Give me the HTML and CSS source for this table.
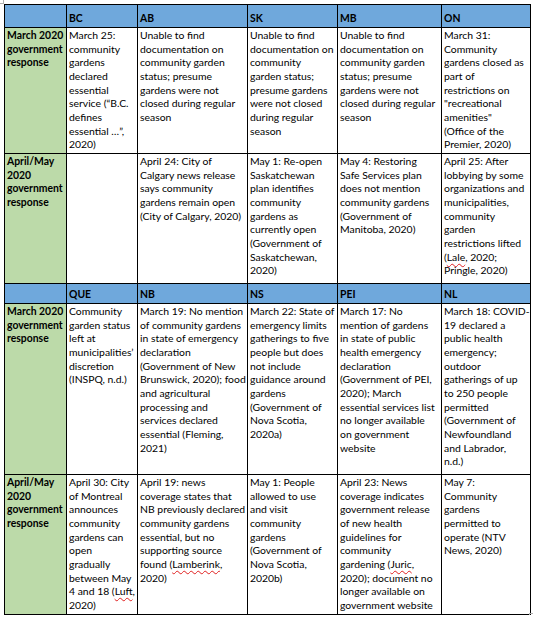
FILE: index.html
```html
<!DOCTYPE html>
<html>
<head>
<meta charset="utf-8">
<link rel="stylesheet" href="styles.css">
</head>
<body>
<div class="wrap">
<span class="handle-tl"></span>
<table class="grid">
<colgroup>
<col class="c0"><col class="c1"><col class="c2"><col class="c3"><col class="c4"><col class="c5">
</colgroup>
<tr class="head h1">
<th></th><th>BC</th><th>AB</th><th>SK</th><th>MB</th><th>ON</th>
</tr>
<tr class="r1">
<td class="label">March 2020<br>government<br>response</td>
<td>March 25:<br>community<br>gardens<br>declared<br>essential<br>service (“B.C.<br>defines<br>essential …”,<br>2020)</td>
<td>Unable to find<br>documentation on<br>community garden<br>status; presume<br>gardens were not<br>closed during regular<br>season</td>
<td>Unable to find<br>documentation on<br>community<br>garden status;<br>presume gardens<br>were not closed<br>during regular<br>season</td>
<td>Unable to find<br>documentation on<br>community garden<br>status; presume<br>gardens were not<br>closed during regular<br>season</td>
<td>March 31:<br>Community<br>gardens closed as<br>part of<br>restrictions on<br>"recreational<br>amenities"<br>(Office of the<br>Premier, 2020)</td>
</tr>
<tr class="r2">
<td class="label">April/May<br>2020<br>government<br>response</td>
<td></td>
<td>April 24: City of<br>Calgary news release<br>says community<br>gardens remain open<br>(City of Calgary, 2020)</td>
<td>May 1: Re-open<br>Saskatchewan<br>plan identifies<br>community<br>gardens as<br>currently open<br>(Government of<br>Saskatchewan,<br>2020)</td>
<td>May 4: Restoring<br>Safe Services plan<br>does not mention<br>community gardens<br>(Government of<br>Manitoba, 2020)</td>
<td>April 25: After<br>lobbying by some<br>organizations and<br>municipalities,<br>community<br>garden<br>restrictions lifted<br>(<span class="sp">Lale</span>, 2020;<br>Pringle, 2020)</td>
</tr>
<tr class="head h2">
<th></th><th>QUE</th><th>NB</th><th>NS</th><th>PEI</th><th>NL</th>
</tr>
<tr class="r3">
<td class="label">March 2020<br>government<br>response</td>
<td>Community<br>garden status<br>left at<br>municipalities’<br>discretion<br>(INSPQ, n.d.)</td>
<td>March 19: No mention<br>of community gardens<br>in state of emergency<br>declaration<br>(Government of New<br>Brunswick, 2020); food<br>and agricultural<br>processing and<br>services declared<br>essential (Fleming,<br>2021)</td>
<td>March 22: State of<br>emergency limits<br>gatherings to five<br>people but does<br>not include<br>guidance around<br>gardens<br>(Government of<br>Nova Scotia,<br>2020a)</td>
<td>March 17: No<br>mention of gardens<br>in state of public<br>health emergency<br>declaration<br>(Government of PEI,<br>2020); March<br>essential services list<br>no longer available<br>on government<br>website</td>
<td>March 18: COVID-<br>19 declared a<br>public health<br>emergency;<br>outdoor<br>gatherings of up<br>to 250 people<br>permitted<br>(Government of<br>Newfoundland<br>and Labrador,<br>n.d.)</td>
</tr>
<tr class="r4">
<td class="label">April/May<br>2020<br>government<br>response</td>
<td>April 30: City<br>of Montreal<br>announces<br>community<br>gardens can<br>open<br>gradually<br>between May<br>4 and 18 (<span class="sp">Luft</span>,<br>2020)</td>
<td>April 19: news<br>coverage states that<br>NB previously declared<br>community gardens<br>essential, but no<br>supporting source<br>found (<span class="sp">Lamberink</span>,<br>2020)</td>
<td>May 1: People<br>allowed to use<br>and visit<br>community<br>gardens<br>(Government of<br>Nova Scotia,<br>2020b)</td>
<td>April 23: News<br>coverage indicates<br>government release<br>of new health<br>guidelines for<br>community<br>gardening (<span class="sp">Juric</span>,<br>2020); document no<br>longer available on<br>government website</td>
<td>May 7:<br>Community<br>gardens<br>permitted to<br>operate (NTV<br>News, 2020)</td>
</tr>
</table>
<span class="handle-br"></span>
</div>
</body>
</html>
```

FILE: styles.css
```css
html, body {
  margin: 0;
  padding: 0;
  background: #ffffff;
}
body {
  font-family: "Lato", "Liberation Sans", sans-serif;
  font-size: 10.4px;
  color: #000;
}
.wrap {
  position: relative;
  padding: 4px 0 0 4px;
  width: 529px;
}
.grid {
  border-collapse: collapse;
  table-layout: fixed;
  width: 527px;
}
.c0 { width: 62px; }
.c1 { width: 71px; }
.c2 { width: 110px; }
.c3 { width: 90px; }
.c4 { width: 104px; }
.c5 { width: 89px; }
.grid th, .grid td {
  border: 1px solid #000;
  padding: 1px 1px 1px 2px;
  line-height: 13.65px;
  vertical-align: top;
  text-align: left;
  white-space: nowrap;
  overflow: hidden;
}
.head th {
  background: #6fa8dc;
  vertical-align: bottom;
  font-weight: bold;
  padding-bottom: 1px;
}
.h1 { height: 23px; }
.h2 { height: 20px; }
.r1 { height: 126px; }
.r2 { height: 130px; }
.r3 { height: 171px; }
.r4 { height: 140px; }
.grid td.label {
  background: #bcdaa9;
  font-weight: bold;
  padding-left: 2px;
  padding-right: 0;
}
.sp {
  text-decoration: underline wavy #e02020;
  text-decoration-thickness: 1px;
  text-underline-offset: 2px;
}
.handle-tl {
  position: absolute;
  left: -4px;
  top: -4px;
  width: 6px;
  height: 6px;
  border: 1px solid #b0b0b0;
}
.handle-br {
  position: absolute;
  left: 529px;
  top: 613px;
  width: 5px;
  height: 5px;
  border: 1px solid #b0b0b0;
}
```
